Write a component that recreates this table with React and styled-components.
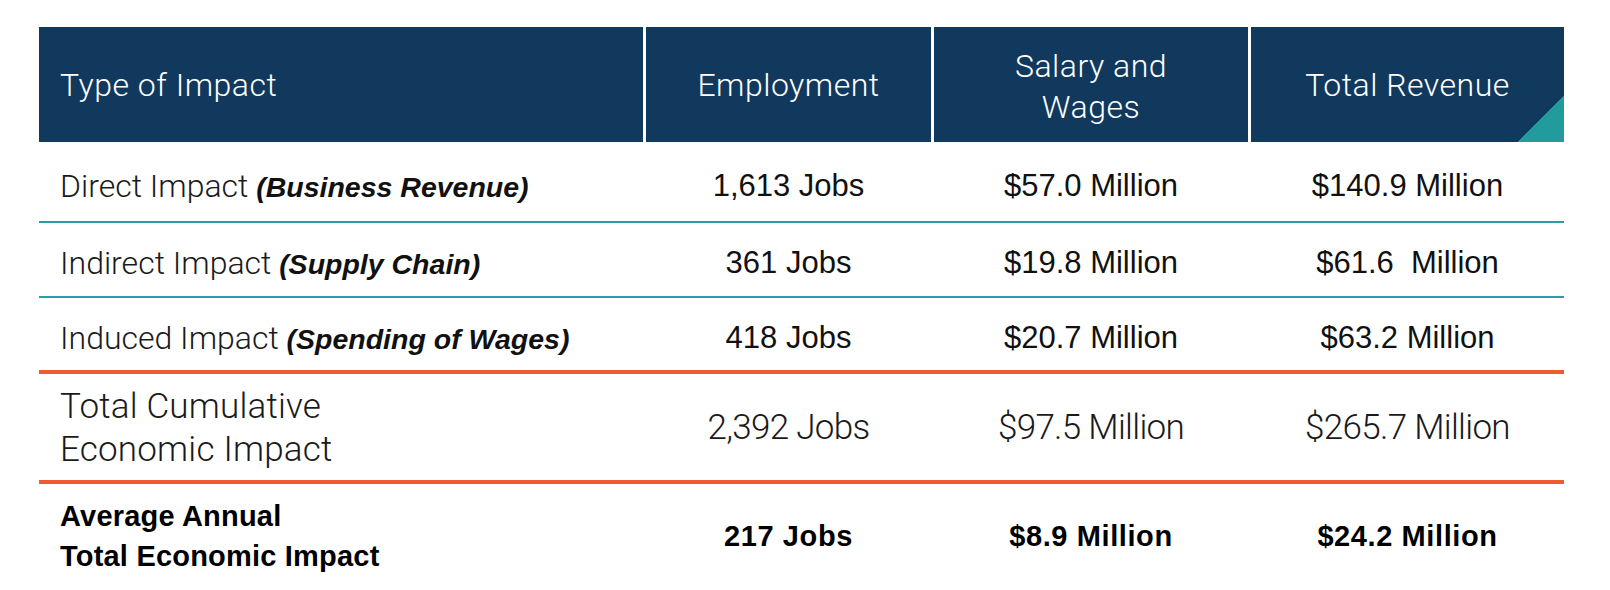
import React from 'react';
import styled, { createGlobalStyle } from 'styled-components';

const GlobalStyle = createGlobalStyle`
  html, body {
    margin: 0;
    padding: 0;
    background: #fff;
  }
  body {
    font-family: Roboto, "Liberation Sans", sans-serif;
    color: #111;
  }
`;

const COLS = '604px 285px 314px 313px';
const NAVY = '#10395d';
const TEAL = '#2a9ea4';
const ORANGE = '#f15a31';

const Page = styled.div`
  width: 1610px;
  height: 590px;
  box-sizing: border-box;
  padding: 27px 0 0 39px;
  overflow: hidden;
`;

const Table = styled.div`
  width: 1525px;
  display: flex;
  flex-direction: column;
`;

const HeadRow = styled.div`
  display: grid;
  grid-template-columns: ${COLS};
  column-gap: 3px;
  height: 115px;
`;

const HeadCell = styled.div`
  display: flex;
  align-items: center;
  justify-content: ${(p) => (p.$left ? 'flex-start' : 'center')};
  padding-left: ${(p) => (p.$left ? '21px' : '0')};
  padding-top: ${(p) => (p.$twoLine ? '4px' : '2px')};
  box-sizing: border-box;
  background: ${(p) =>
    p.$corner
      ? `linear-gradient(135deg, ${NAVY} calc(100% - 33px), #229b9d calc(100% - 33px))`
      : NAVY};
  color: #fff;
  font-family: Roboto, sans-serif;
  font-weight: 300;
  font-size: 32px;
  letter-spacing: 0.5px;
  line-height: 41px;
  text-align: center;
`;

const Row = styled.div`
  display: grid;
  grid-template-columns: ${COLS};
  column-gap: 3px;
  align-items: center;
  height: ${(p) => p.$height}px;
  padding-top: ${(p) => p.$shift || 0}px;
  box-sizing: border-box;
  border-bottom: ${(p) => (p.$line ? `${p.$lineWidth}px solid ${p.$line}` : 'none')};
`;

const Label = styled.div`
  padding-left: 21px;
  font-family: Roboto, sans-serif;
  font-weight: 300;
  font-size: 32px;
  color: #1a1a1a;
  white-space: nowrap;
`;

const Note = styled.em`
  font-family: "Liberation Sans", Arial, sans-serif;
  font-weight: 700;
  font-style: italic;
  font-size: 28.5px;
  color: #111;
`;

const BigLabel = styled(Label)`
  font-size: 35px;
  letter-spacing: 0.2px;
  line-height: 43px;
`;

const BoldLabel = styled(Label)`
  font-family: "Liberation Sans", Arial, sans-serif;
  font-weight: 700;
  font-size: 29px;
  letter-spacing: 0.2px;
  line-height: 40px;
  color: #000;
`;

const Value = styled.div`
  text-align: center;
  white-space: pre;
  font-family: "Liberation Sans", Arial, sans-serif;
  font-size: 31px;
  color: #111;
  ${(p) =>
    p.$light &&
    `
    font-family: Roboto, sans-serif;
    font-weight: 300;
    font-size: 35px;
    letter-spacing: -0.7px;
    color: #1a1a1a;
  `}
  ${(p) =>
    p.$bold &&
    `
    font-weight: 700;
    font-size: 29px;
    letter-spacing: 0.6px;
    color: #000;
  `}
`;

const rows = [
  { label: 'Direct Impact', note: '(Business Revenue)', vals: ['1,613 Jobs', '$57.0 Million', '$140.9 Million'], height: 81, shift: 9, line: TEAL, lw: 2 },
  { label: 'Indirect Impact', note: '(Supply Chain)', vals: ['361 Jobs', '$19.8 Million', '$61.6  Million'], height: 75, shift: 6, line: TEAL, lw: 2 },
  { label: 'Induced Impact', note: '(Spending of Wages)', vals: ['418 Jobs', '$20.7 Million', '$63.2 Million'], height: 76, shift: 7, line: ORANGE, lw: 4 },
];

export default function App() {
  return (
    <>
      <GlobalStyle />
      <Page>
        <Table>
          <HeadRow>
            <HeadCell $left>Type of Impact</HeadCell>
            <HeadCell>Employment</HeadCell>
            <HeadCell $twoLine>Salary and<br />Wages</HeadCell>
            <HeadCell $corner>Total Revenue</HeadCell>
          </HeadRow>

          {rows.map((r) => (
            <Row key={r.label} $height={r.height} $shift={r.shift} $line={r.line} $lineWidth={r.lw}>
              <Label>
                {r.label} <Note>{r.note}</Note>
              </Label>
              {r.vals.map((v) => (
                <Value key={v}>{v}</Value>
              ))}
            </Row>
          ))}

          <Row $height={110} $shift={1} $line={ORANGE} $lineWidth={4}>
            <BigLabel>
              Total Cumulative<br />Economic Impact
            </BigLabel>
            <Value $light>2,392 Jobs</Value>
            <Value $light>$97.5 Million</Value>
            <Value $light>$265.7 Million</Value>
          </Row>

          <Row $height={104}>
            <BoldLabel>
              Average Annual<br />Total Economic Impact
            </BoldLabel>
            <Value $bold>217 Jobs</Value>
            <Value $bold>$8.9 Million</Value>
            <Value $bold>$24.2 Million</Value>
          </Row>
        </Table>
      </Page>
    </>
  );
}
